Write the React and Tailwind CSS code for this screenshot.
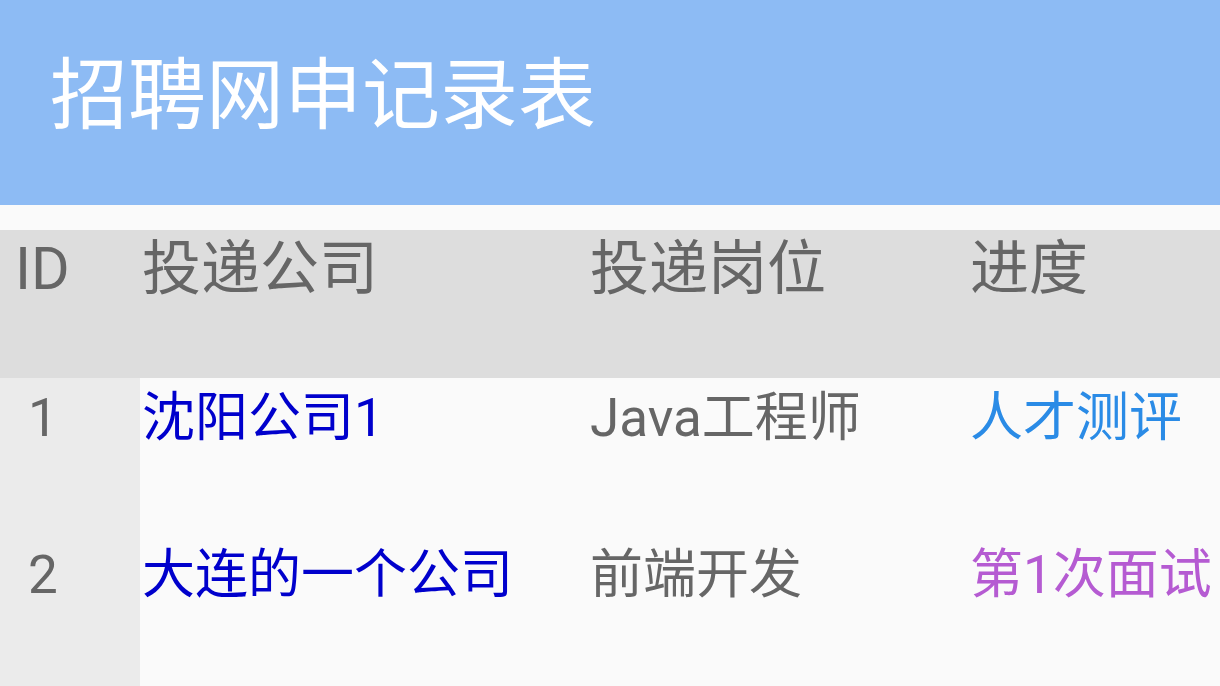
const rows = [
  { id: 1, company: '沈阳公司1', job: 'Java工程师', status: '人才测评', statusColor: 'text-[#2a8be6]' },
  { id: 2, company: '大连的一个公司', job: '前端开发', status: '第1次面试', statusColor: 'text-[#b55bd2]' },
]

export default function App() {
  return (
    <div
      className="min-h-screen bg-[#fafafa] overflow-hidden"
      style={{ fontFamily: 'Roboto, "Noto Sans CJK SC", sans-serif' }}
    >
      {/* Title bar */}
      <div className="h-[205px] bg-[#8dbbf4] pl-[50px] pt-[50px]">
        <h1 className="text-[78px] leading-[1.2] text-white font-normal">招聘网申记录表</h1>
      </div>

      <div className="h-[25px]" />

      {/* Table header */}
      <div className="grid grid-cols-[140px_450px_380px_1fr] h-[148px] bg-[#dddddd] text-[#666666] text-[59px] leading-[1.2]">
        <div className="pl-[15px] pt-[4px]">ID</div>
        <div className="pl-[2px] pt-[4px]">投递公司</div>
        <div className="pt-[4px]">投递岗位</div>
        <div className="pt-[4px]">进度</div>
      </div>

      {/* Table body */}
      {rows.map((r) => (
        <div key={r.id} className="grid grid-cols-[140px_450px_380px_1fr] h-[157px] text-[53px] leading-[1.2]">
          <div className="bg-[#ebebeb] pl-[28px] pt-[9px] text-[#666666]">{r.id}</div>
          <div className="pl-[2px] pt-[9px] text-[#0000cc] whitespace-nowrap">{r.company}</div>
          <div className="pt-[9px] text-[#666666] whitespace-nowrap">{r.job}</div>
          <div className={`pt-[9px] whitespace-nowrap ${r.statusColor}`}>{r.status}</div>
        </div>
      ))}
    </div>
  )
}
